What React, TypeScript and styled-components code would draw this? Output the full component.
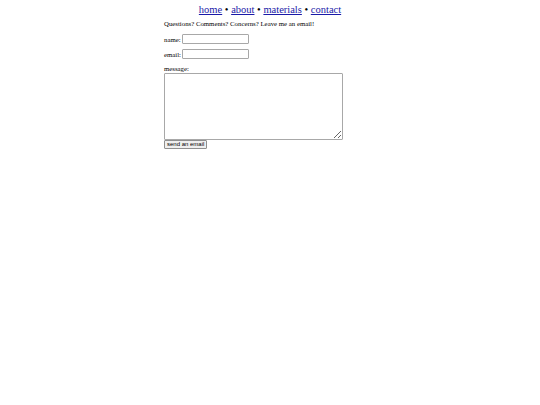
import styled, { createGlobalStyle } from "styled-components";

const GlobalStyle = createGlobalStyle`
  html, body {
    margin: 0;
    padding: 0;
    background: #ffffff;
  }
  body {
    font-family: "Liberation Serif", "Times New Roman", serif;
    color: #000000;
  }
`;

const Nav = styled.nav`
  text-align: center;
  font-size: 10.5px;
  line-height: 12px;
  padding-top: 4px;
`;

const NavLink = styled.a`
  color: #1a1aa8;
  text-decoration: underline;
`;

const Content = styled.div`
  width: 212px;
  margin: 0 auto;
  font-size: 6.8px;
`;

const Intro = styled.p`
  margin: 3px 0 6px;
  line-height: 9px;
`;

const Field = styled.div`
  display: flex;
  align-items: center;
  gap: 1px;
  margin-bottom: 5px;
`;

const Label = styled.label`
  line-height: 9px;
`;

const TextInput = styled.input`
  box-sizing: border-box;
  width: 67px;
  height: 10px;
  padding: 0;
  border: 1px solid #a8a8a8;
  border-radius: 1px;
  font-size: 7px;
`;

const MessageBlock = styled.div`
  display: flex;
  flex-direction: column;
  align-items: flex-start;
`;

const MessageArea = styled.textarea`
  box-sizing: border-box;
  width: 179px;
  height: 67px;
  margin: 0;
  padding: 1px;
  border: 1px solid #a8a8a8;
  border-radius: 1px;
  font-size: 7px;
`;

const SendButton = styled.button`
  box-sizing: border-box;
  height: 9px;
  padding: 0 2px;
  margin: 0;
  font-family: "Liberation Sans", Arial, sans-serif;
  font-size: 6px;
  line-height: 7px;
  color: #000000;
  background: #efefef;
  border: 1px solid #8f8f8f;
  border-radius: 1px;
`;

export default function App() {
  return (
    <>
      <GlobalStyle />
      <Nav>
        <NavLink href="#">home</NavLink> • <NavLink href="#">about</NavLink> •{" "}
        <NavLink href="#">materials</NavLink> • <NavLink href="#">contact</NavLink>
      </Nav>
      <Content>
        <Intro>Questions? Comments? Concerns? Leave me an email!</Intro>
        <Field>
          <Label htmlFor="name">name:</Label>
          <TextInput id="name" type="text" />
        </Field>
        <Field>
          <Label htmlFor="email">email:</Label>
          <TextInput id="email" type="text" />
        </Field>
        <MessageBlock>
          <Label htmlFor="message">message:</Label>
          <MessageArea id="message" />
          <SendButton type="button">send an email</SendButton>
        </MessageBlock>
      </Content>
    </>
  );
}
